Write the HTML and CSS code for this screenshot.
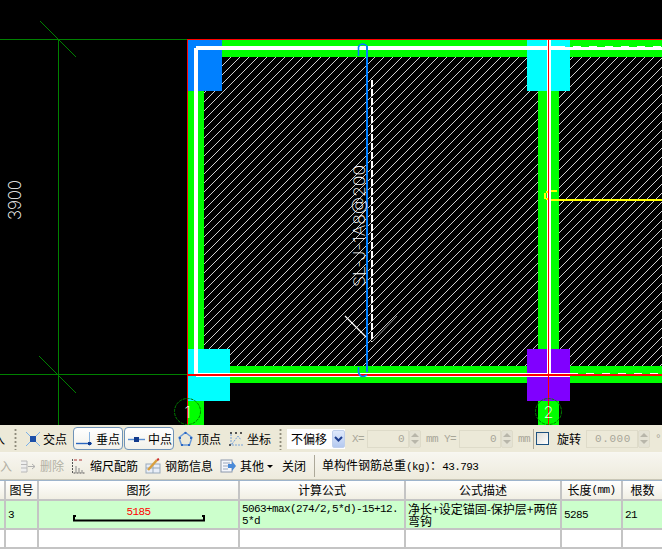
FILE: index.html
```html
<!DOCTYPE html>
<html lang="zh">
<head>
<meta charset="utf-8">
<title>钢筋</title>
<link rel="stylesheet" href="styles.css">
</head>
<body>
<svg class="canvas" width="662" height="425" viewBox="0 0 662 425">
  <defs>
    <pattern id="hatch" patternUnits="userSpaceOnUse" width="9" height="9">
      <path d="M-1 10L10 -1" stroke="#d0d0d0" stroke-width="1" fill="none"/>
    </pattern>
  </defs>
  <g shape-rendering="crispEdges">
    <rect x="204" y="57" width="334" height="309" fill="url(#hatch)"/>
    <rect x="559" y="57" width="103" height="309" fill="url(#hatch)"/>
    <rect x="188" y="40" width="474" height="17" fill="#00ff00"/>
    <rect x="188" y="366" width="474" height="17" fill="#00ff00"/>
    <rect x="188" y="40" width="16" height="385" fill="#00ff00"/>
    <rect x="538" y="40" width="21" height="385" fill="#00ff00"/>
    <rect x="188" y="40" width="34" height="51" fill="#0080ff"/>
    <rect x="527" y="40" width="43" height="51" fill="#00ffff"/>
    <rect x="188" y="349" width="42" height="52" fill="#00ffff"/>
    <rect x="527" y="349" width="43" height="52" fill="#8000ff"/>
    <rect x="196" y="46" width="361" height="4" fill="#fff"/>
    <rect x="557" y="47" width="105" height="3" fill="#fff"/>
    <path d="M557 46.500H662" stroke="#fff" stroke-dasharray="8 8" fill="none"/>
    <rect x="194" y="48" width="4" height="328" fill="#fff"/>
    <rect x="547" y="40" width="4" height="336" fill="#fff"/>
    <rect x="196" y="373" width="374" height="4" fill="#fff"/>
    <path d="M570 373.500H662" stroke="#fff" stroke-dasharray="8 8" fill="none"/>
    <path d="M0 39.500H187M0 374.500H187M58.500 40V425" stroke="#008000" fill="none"/>
    <path d="M187 39.500H662M187.500 39V425M548.500 39V425" stroke="#ff0000" fill="none"/>
    <rect x="188" y="374" width="474" height="2" fill="#ff0000"/>
    <rect x="551" y="199" width="111" height="2" fill="#ffff00"/>
    <rect x="551" y="190" width="6" height="2" fill="#ffff00"/>
    <rect x="544" y="193" width="2" height="6" fill="#ffff00"/>
    <rect x="546" y="191" width="2" height="2" fill="#ffff00"/>
    <rect x="546" y="198" width="2" height="2" fill="#ffff00"/>
    <rect x="366" y="46" width="2" height="326" fill="#0080ff"/>
  </g>
  <path d="M40 21L76 57M39 356L76 393" stroke="#008000" fill="none"/>
  <path d="M358.500 56V47Q359 45 362 44Q365 44 367 46M358.500 367V372Q360 379 367 375" stroke="#0080ff" stroke-width="1.600" fill="none"/>
  <path d="M372 80V342" stroke="#fff" stroke-width="2" stroke-dasharray="7 2" fill="none"/>
  <path d="M345 316L366 337" stroke="#fff" stroke-width="1.200" fill="none"/>
  <path d="M397 316L372 342" stroke="#999" fill="none"/>
  <circle cx="187.500" cy="411.500" r="13" fill="none" stroke="#008000" stroke-dasharray="3 1"/>
  <circle cx="548.500" cy="411.500" r="13" fill="none" stroke="#008000" stroke-dasharray="3 1"/>
  <text class="cad-text" transform="translate(21 220) rotate(-90)" textLength="40" lengthAdjust="spacingAndGlyphs">3900</text>
  <text class="cad-text cad-small" transform="translate(365 287) rotate(-90)" textLength="122" lengthAdjust="spacingAndGlyphs">SL-J-1A8@200</text>
  <text class="axis one" x="187.500" y="418">1</text>
  <text class="axis two" x="548.500" y="418">2</text>
</svg>

<div class="bar bar-snap">
  <span class="cut">入</span>
  <span class="grip"></span>
  <span class="tool tool-x">
    <svg class="ico" width="16" height="16" viewBox="0 0 16 16"><path d="M1 1L15 15M15 1L1 15" stroke="#7ab0e8" fill="none"/><rect x="5" y="5" width="6" height="6" fill="#1c4fa8"/></svg>
    交点
  </span>
  <span class="toggle toggle-a">
    <svg class="ico" width="18" height="16" viewBox="0 0 18 16"><path d="M0 12.500H16" stroke="#2a66c0" stroke-width="1.400" fill="none"/><path d="M13.500 1V15" stroke="#8ab4e0" fill="none"/><rect x="12" y="11" width="3" height="3" fill="#123a8c"/></svg>
    垂点
  </span>
  <span class="toggle toggle-b">
    <svg class="ico" width="18" height="16" viewBox="0 0 18 16"><path d="M0 8.500H17" stroke="#5a8ed0" stroke-width="1.400" fill="none"/><rect x="6" y="6" width="5" height="5" fill="#123a8c"/></svg>
    中点
  </span>
  <span class="tool tool-p">
    <svg class="ico" width="15" height="16" viewBox="0 0 15 16"><path d="M7.500 1.500L14 6.500L11.500 14H3.500L1 6.500Z" fill="none" stroke="#6a9ad8" stroke-width="1.400"/><path d="M6.500 1h2v2h-2zM1 6h2v2H1zM12 6h2v2h-2zM3 13h2v2H3zM10 13h2v2h-2z" fill="#2a66c0"/></svg>
    顶点
  </span>
  <span class="tool tool-c">
    <svg class="ico" width="16" height="16" viewBox="0 0 16 16"><path d="M3 3V14H15M4 13L10 5L13 9" fill="none" stroke="#7aa4d8" stroke-dasharray="2 1"/><path d="M2 1h2v2H2zM12 1h2v2h-2zM7 1h2v2H7zM1 13h2v2H1z" fill="#555"/></svg>
    坐标
  </span>
  <span class="grip grip-2"></span>
  <span class="select"><span class="select-val">不偏移</span><span class="drop"><svg width="9" height="6" viewBox="0 0 9 6"><path d="M1 1L4.500 4.500L8 1" fill="none" stroke="#1f3f8f" stroke-width="2"/></svg></span></span>
  <span class="lbl lbl-x">X=</span>
  <span class="field field-n">0</span>
  <span class="spin"><i class="up"></i><i class="down"></i></span>
  <span class="unit">mm</span>
  <span class="lbl lbl-y">Y=</span>
  <span class="field field-n">0</span>
  <span class="spin"><i class="up"></i><i class="down"></i></span>
  <span class="unit">mm</span>
  <span class="sep sep-1"></span>
  <span class="check"></span>
  <span class="rot">旋转</span>
  <span class="field field-r">0.000</span>
  <span class="spin"><i class="up"></i><i class="down"></i></span>
  <span class="deg">°</span>
</div>

<div class="bar bar-act">
  <span class="off off-in">入</span>
  <svg class="ico" width="16" height="15" viewBox="0 0 16 15"><path d="M1 2H7V13H1M1 5.500H7M1 9H7" fill="#eee" stroke="#b8b8b8"/><path d="M8 7.500H15M12 5L15 7.500L12 10" fill="none" stroke="#b0b0b0"/></svg>
  <span class="off off-del">删除</span>
  <svg class="ico" width="15" height="16" viewBox="0 0 15 16"><path d="M1.500 1V15H14" fill="none" stroke="#555" stroke-dasharray="2 1"/><path d="M5 8V15M8 10V15M11 12V15" stroke="#888" fill="none"/><path d="M3 2H13" stroke="#a33" stroke-dasharray="3 2" fill="none"/></svg>
  <span class="act">缩尺配筋</span>
  <svg class="ico" width="16" height="16" viewBox="0 0 16 16"><rect x="1" y="6" width="14" height="9" fill="#e8eef8" stroke="#9ab"/><path d="M8 6V15M1 10H15" stroke="#9ab" fill="none"/><path d="M3 12L12 2" stroke="#d8a040" stroke-width="2.500" fill="none"/><path d="M12 2L14 1" stroke="#c33" stroke-width="2" fill="none"/></svg>
  <span class="act">钢筋信息</span>
  <svg class="ico" width="16" height="16" viewBox="0 0 16 16"><rect x="1" y="2" width="11" height="12" fill="#f4f6fb" stroke="#8c98ac"/><path d="M3 5H10M3 8H8M3 11H8" stroke="#9aa6bc" fill="none"/><path d="M8 6H12V3L16 8L12 13V10H8Z" fill="#4a8ad8"/></svg>
  <span class="act">其他</span>
  <span class="caret"></span>
  <span class="act act-close">关闭</span>
  <span class="sep sep-2"></span>
  <span class="act">单构件钢筋总重<span class="lat">(kg)</span>：<span class="lat">43.793</span></span>
</div>

<div class="grid">
  <div class="cell head"></div>
  <div class="cell head">图号</div>
  <div class="cell head">图形</div>
  <div class="cell head">计算公式</div>
  <div class="cell head">公式描述</div>
  <div class="cell head">长度<span class="lat">(mm)</span></div>
  <div class="cell head last">根数</div>

  <div class="cell row"></div>
  <div class="cell row left"><span class="lat">3</span></div>
  <div class="cell row shape">
    <span class="len">5185</span>
    <svg class="rebar" width="132" height="7" viewBox="0 0 132 7"><path d="M3 1H1V5.500H131V1H129" fill="none" stroke="#000" stroke-width="2"/></svg>
  </div>
  <div class="cell row left two-line"><span class="lat">5063+max(274/2,5*d)-15+12.<br>5*d</span></div>
  <div class="cell row left two-line">净长+设定锚固-保护层+两倍<br>弯钩</div>
  <div class="cell row left"><span class="lat">5285</span></div>
  <div class="cell row left last"><span class="lat">21</span></div>

  <div class="cell blank"></div>
  <div class="cell blank"></div>
  <div class="cell blank"></div>
  <div class="cell blank"></div>
  <div class="cell blank"></div>
  <div class="cell blank"></div>
  <div class="cell blank last"></div>
</div>
</body>
</html>
```
FILE: styles.css
```css
* { box-sizing: border-box; }
html, body { margin: 0; padding: 0; height: 552px; overflow: hidden; background: #fff; }
body { font: 12px/14px "Noto Sans CJK SC", "Liberation Sans", sans-serif; color: #000; width: 662px; }

.canvas { display: block; background: #000; }
.cad-text { font: 200 18px Inter, "Liberation Sans", sans-serif; fill: #fff; }
.cad-small { font-size: 16px; }
.axis { font: 200 16px Inter, "Liberation Sans", sans-serif; text-anchor: middle; fill: #fff; }

.bar { display: flex; align-items: center; white-space: nowrap; overflow: hidden; }
.bar > * { flex: none; }
.bar-snap { height: 27px; background: #ece9d8; }
.bar-act { height: 28px; background: linear-gradient(#f7f6f0, #eeebdd); border-top: 1px solid #f8f7f2; border-bottom: 1px solid #c9c6b6; }
.ico { flex: none; display: block; }

.cut { width: 5px; overflow: hidden; direction: rtl; margin-right: 9px; }
.grip { width: 3px; height: 22px; margin-right: 7px; background: radial-gradient(circle, #8f8c7c 1px, transparent 1.2px) 0 0 / 3px 4px; }
.tool { display: flex; align-items: center; gap: 4px; }
.tool-x { width: 43px; margin-right: 6px; padding-left: 1px; gap: 2px; }
.toggle { display: flex; align-items: center; gap: 2px; width: 50px; height: 23px; padding-left: 2px; border: 1px solid #6f93b8; border-radius: 4px; background: linear-gradient(#fff, #f2f1ea); }
.toggle-a { margin-right: 1px; }
.toggle-b { margin-right: 4px; padding-left: 3px; }
.tool-p { width: 46px; margin-right: 4px; }
.tool-c { width: 47px; gap: 3px; }
.grip-2 { margin-left: 4px; margin-right: 5px; }

.select { display: flex; align-items: center; width: 58px; height: 20px; background: #fff; }
.select-val { flex: 1; padding-left: 4px; }
.drop { display: flex; align-items: center; justify-content: center; width: 13px; height: 18px; background: linear-gradient(#dfe9fb, #b4c9f0); border: 1px solid #c0d0ec; border-radius: 2px; }

.lbl, .unit, .field, .deg { font-family: "Liberation Mono", monospace; font-size: 11px; letter-spacing: -0.6px; color: #a8a698; }
.lbl-x { width: 15px; margin-left: 7px; }
.lbl-y { width: 15px; margin-left: 6px; }
.field { width: 42px; height: 18px; padding-right: 4px; line-height: 17px; text-align: right; border: 1px solid #dedbc9; background: #ece9d8; }
.field-r { width: 52px; padding-right: 6px; letter-spacing: 0.6px; }
.spin { width: 12px; height: 18px; display: flex; flex-direction: column; align-items: center; justify-content: center; gap: 3px; background: #e4e2d4; border: 1px solid #dedbc9; border-radius: 2px; }
.spin i { display: block; width: 0; height: 0; border-left: 4px solid transparent; border-right: 4px solid transparent; }
.spin .up { border-bottom: 4px solid #b8b6aa; }
.spin .down { border-top: 4px solid #b8b6aa; }
.unit { width: 12px; margin-left: 5px; }
.sep { width: 1px; height: 20px; background: #aca899; }
.sep-1 { margin-left: 3px; }
.check { width: 13px; height: 13px; margin-left: 2px; border: 1px solid #1c5180; background: linear-gradient(135deg, #dcdcd7, #fff); }
.rot { width: 24px; margin-left: 8px; margin-right: 5px; }
.deg { margin-left: 5px; }

.bar-act .ico { margin-right: 4px; }
.off { color: #b2b0a4; }
.off-in { width: 12px; margin-right: 8px; }
.off-del + .ico { margin-left: 7px; }
.act + .ico { margin-left: 7px; }
.caret { width: 0; height: 0; margin-left: 3px; border-left: 3px solid transparent; border-right: 3px solid transparent; border-top: 3px solid #000; }
.act-close { margin-left: 9px; }
.sep-2 { margin-left: 8px; margin-right: 7px; height: 22px; }
.lat { font-family: "Liberation Mono", monospace; font-size: 11px; letter-spacing: -0.6px; }

.grid { display: grid; grid-template-columns: 6px 33px 201px 166px 156px 61px 39px; grid-template-rows: 20px 29px 19px; border-top: 1px solid #9db4cc; }
.cell { border-right: 2px solid #c4c4c4; border-bottom: 2px solid #c4c4c4; }
.cell.last { border-right: 0; }
.head { display: flex; align-items: center; justify-content: center; background: linear-gradient(#fff, #f1efe4); }
.row { background: #ccffcc; display: flex; align-items: center; }
.left { padding-left: 2px; }
.two-line { line-height: 12px; }
.blank { background: #fff; }
.shape { flex-direction: column; justify-content: flex-start; padding-top: 6px; }
.len { font-family: "Liberation Mono", monospace; font-size: 11px; letter-spacing: -0.6px; line-height: 11px; color: #f00; }
.rebar { display: block; margin-top: -3px; }
```
